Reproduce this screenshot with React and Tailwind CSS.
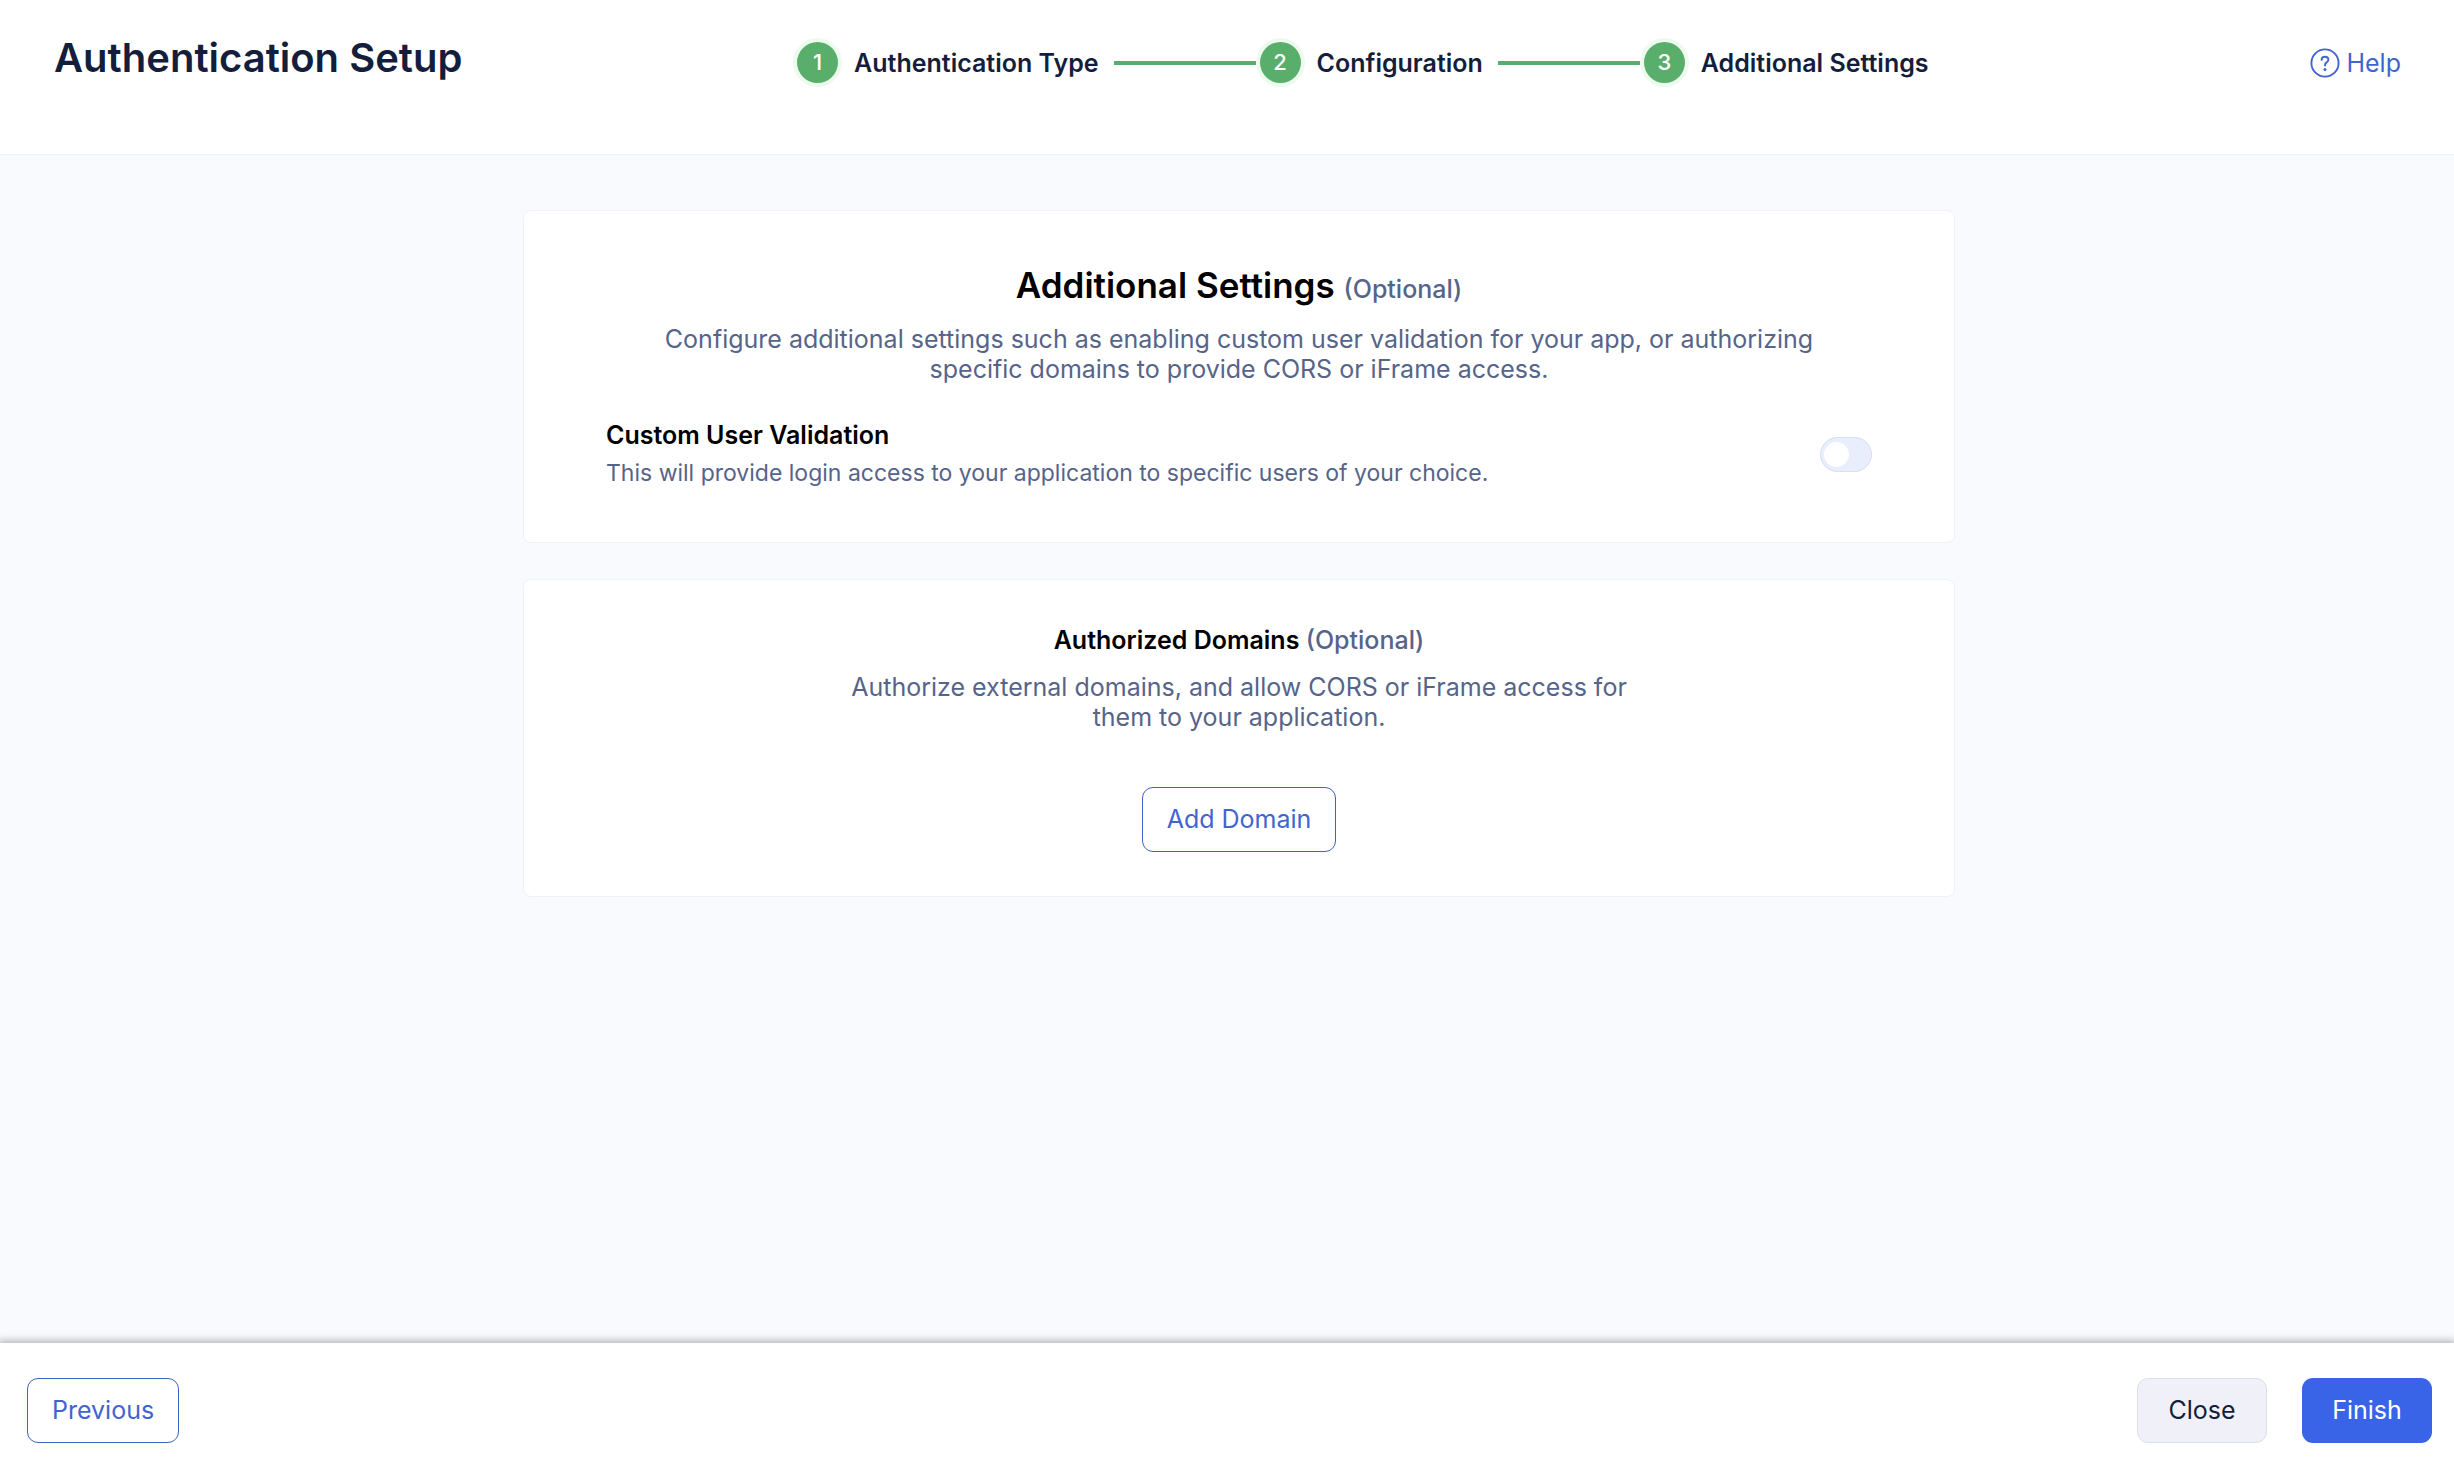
import React, { useState } from 'react';

const steps = ['Authentication Type', 'Configuration', 'Additional Settings'];

const HelpIcon = () => (
  <svg className="w-[30px] h-[30px]" viewBox="0 0 30 30" fill="none" stroke="currentColor" aria-hidden="true">
    <circle cx="15" cy="15" r="13.6" strokeWidth="1.9" />
    <path
      d="M11.6 11.9c0-1.9 1.5-3.2 3.4-3.2s3.4 1.2 3.4 3c0 1.4-.8 2-1.8 2.7-1 .7-1.6 1.4-1.6 2.8v.4"
      strokeWidth="1.9"
      strokeLinecap="round"
      strokeLinejoin="round"
    />
    <circle cx="15" cy="21.4" r="1.5" fill="currentColor" stroke="none" />
  </svg>
);

// Numbered steps joined by green lines
const Stepper = () => (
  <ol className="flex items-center">
    {steps.map((label, index) => (
      <li key={label} className="flex items-center">
        {index > 0 && <span className="w-[142px] h-1 ml-[15px] mr-1 bg-[#5aae6b]" />}
        <span className="flex items-center justify-center w-[41px] h-[41px] rounded-full bg-[#5aae6b] ring-4 ring-[#edfbef] text-white text-[22px] font-medium">
          {index + 1}
        </span>
        <span className="ml-4 text-[25px] leading-[30px] font-semibold text-[#141e3c]">{label}</span>
      </li>
    ))}
  </ol>
);

const Header = () => (
  <header className="flex items-start justify-between pl-[54px] pr-[53px] pt-[34px] pb-[71px] bg-white border-b border-[#eef0f5]">
    <h1 className="flex-8 text-[40px] leading-[48px] font-semibold text-[#141e3c]">Authentication Setup</h1>
    <div className="pt-2 pr-2">
      <Stepper />
    </div>
    <div className="flex-5 flex justify-end pt-[14px]">
      <a href="#help" className="flex items-center gap-1.5 text-[25px] leading-[30px] text-[#4264d0]">
        <HelpIcon />
        Help
      </a>
    </div>
  </header>
);

const Optional = () => <span className="text-[25px] leading-none font-medium text-[#56648a]">(Optional)</span>;

const Card = ({ className, children }) => (
  <section className={`bg-white border border-[#f0f2f8] rounded-lg ${className}`}>{children}</section>
);

const App = () => {
  const [customValidation, setCustomValidation] = useState(false);

  return (
    <div className="min-h-screen flex flex-col bg-[#f9fafe] font-['Inter',sans-serif]">
      <Header />

      <main className="flex-1 pl-6 pt-[55px] pb-10">
        <div className="flex flex-col gap-9 w-full max-w-[1432px] mx-auto">
          <Card className="px-[82px] pt-[52px] pb-[54px]">
            <h2 className="text-center text-[35px] leading-[44px] font-semibold text-black">
              Additional Settings <Optional />
            </h2>
            <p className="max-w-[1180px] mx-auto mt-[17px] text-center text-[25px] leading-[30px] text-[#56648a]">
              Configure additional settings such as enabling custom user validation for your app, or authorizing
              specific domains to provide CORS or iFrame access.
            </p>
            <div className="flex items-center justify-between mt-9">
              <div>
                <label htmlFor="custom-validation" className="block text-[25px] leading-[30px] font-semibold text-black">
                  Custom User Validation
                </label>
                <p id="custom-validation-hint" className="mt-2 text-[23px] leading-[30px] text-[#56648a]">
                  This will provide login access to your application to specific users of your choice.
                </p>
              </div>
              <span className="relative flex w-[52px] h-[35px]">
                <input
                  id="custom-validation"
                  type="checkbox"
                  role="switch"
                  aria-describedby="custom-validation-hint"
                  checked={customValidation}
                  onChange={(e) => setCustomValidation(e.target.checked)}
                  className="peer appearance-none w-full h-full rounded-full border border-[#d9def0] bg-[#e8eefc] checked:bg-[#3a64e8] cursor-pointer"
                />
                <span className="absolute left-1 top-[5px] w-[25px] h-[25px] rounded-full bg-white pointer-events-none transition-transform peer-checked:translate-x-5" />
              </span>
            </div>
          </Card>

          <Card className="flex flex-col items-center pt-[45px] pb-11">
            <h3 className="text-[25px] leading-[30px] font-semibold text-black">
              Authorized Domains <Optional />
            </h3>
            <p className="max-w-[800px] mt-[17px] text-center text-[25px] leading-[30px] text-[#56648a]">
              Authorize external domains, and allow CORS or iFrame access for them to your application.
            </p>
            <button
              type="button"
              className="h-[65px] mt-[55px] px-6 rounded-[11px] border border-[#3f62c4] bg-white text-[25px] text-[#4264d0]"
            >
              Add Domain
            </button>
          </Card>
        </div>
      </main>

      <footer className="flex items-center justify-between pl-[27px] pr-[22px] pt-[35px] pb-[19px] bg-white shadow-[0_0_8px_2px_rgba(0,0,0,0.3)]">
        <button
          type="button"
          className="h-[65px] px-6 rounded-[11px] border border-[#3f62c4] bg-white text-[25px] text-[#4264d0]"
        >
          Previous
        </button>
        <div className="flex gap-[35px]">
          <button
            type="button"
            className="w-[130px] h-[65px] rounded-[11px] border border-[#dcdfea] bg-[#f0f1f8] text-[25px] text-[#141e3c]"
          >
            Close
          </button>
          <button type="button" className="w-[130px] h-[65px] rounded-[11px] bg-[#3a64e8] text-[25px] text-white">
            Finish
          </button>
        </div>
      </footer>
    </div>
  );
};

export default App;
